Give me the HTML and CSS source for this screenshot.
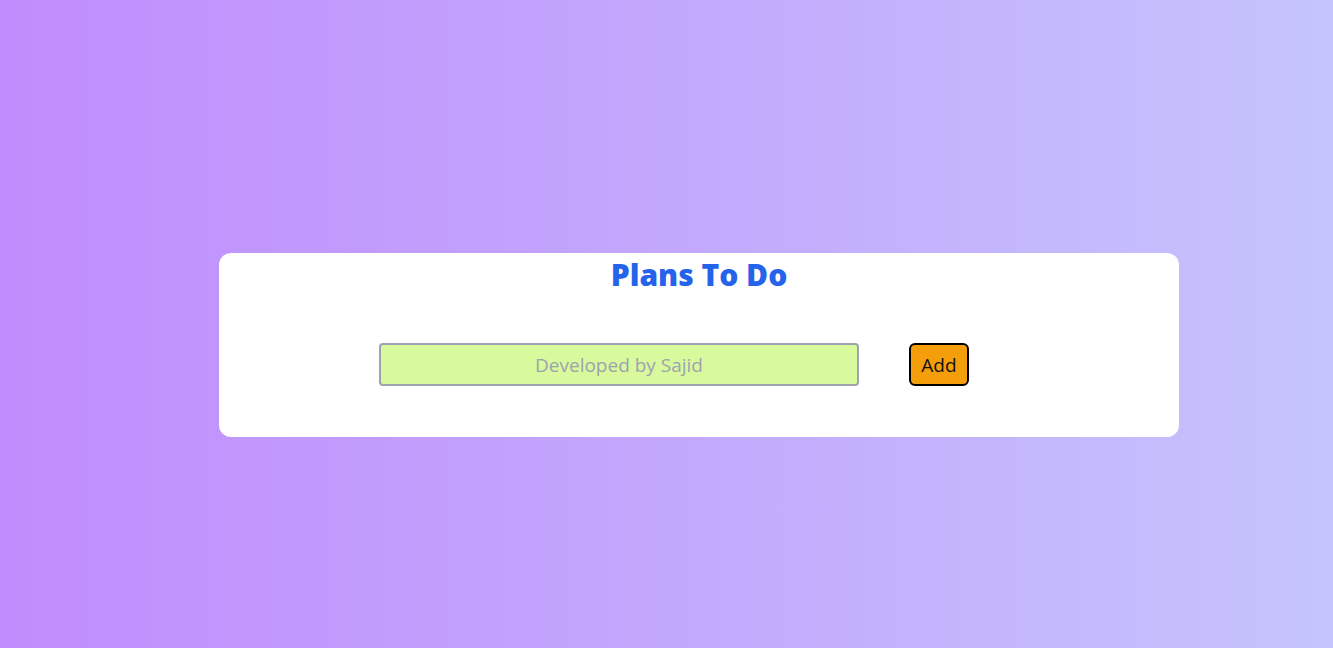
FILE: index.html
```html
<!DOCTYPE html>
<html lang="en">
<head>
<meta charset="utf-8">
<title>Plans To Do</title>
<link rel="stylesheet" href="styles.css">
</head>
<body>
<main class="page">
  <section class="card">
    <h1 class="title">Plans To Do</h1>
    <div class="row">
      <input class="task-input" type="text" placeholder="Developed by Sajid">
      <button class="add-btn">Add</button>
    </div>
  </section>
</main>
</body>
</html>
```
FILE: styles.css
```css
* { box-sizing: border-box; }
html, body { margin: 0; height: 100%; }
body {
  font-family: "Open Sans", "Noto Sans", sans-serif;
  background: linear-gradient(to right, #c08cfd, #c5c4fc);
}
.page {
  height: 648px;
  display: flex;
  align-items: center;
  justify-content: center;
  padding-left: 65px;
}
.card {
  width: 960px;
  height: 184px;
  background: #ffffff;
  border-radius: 12px;
  margin-top: 42px;
  display: flex;
  flex-direction: column;
}
.title {
  margin: 0;
  padding-top: 2px;
  height: 90px;
  text-align: center;
  font-size: 30px;
  font-weight: 800;
  color: #2563eb;
  line-height: 40px;
}
.row {
  display: flex;
  gap: 50px;
  padding-left: 160px;
}
.task-input {
  width: 480px;
  height: 43px;
  background: #d9f99d;
  border: 2px solid #9ca3af;
  border-radius: 4px;
  font-family: inherit;
  font-size: 19px;
  text-align: center;
  outline: none;
}
.task-input::placeholder { color: #9ca3af; }
.add-btn {
  width: 60px;
  height: 43px;
  background: #f59e0b;
  border: 2px solid #000000;
  border-radius: 6px;
  font-family: inherit;
  font-size: 19px;
  color: #111;
  padding: 0;
}
```
